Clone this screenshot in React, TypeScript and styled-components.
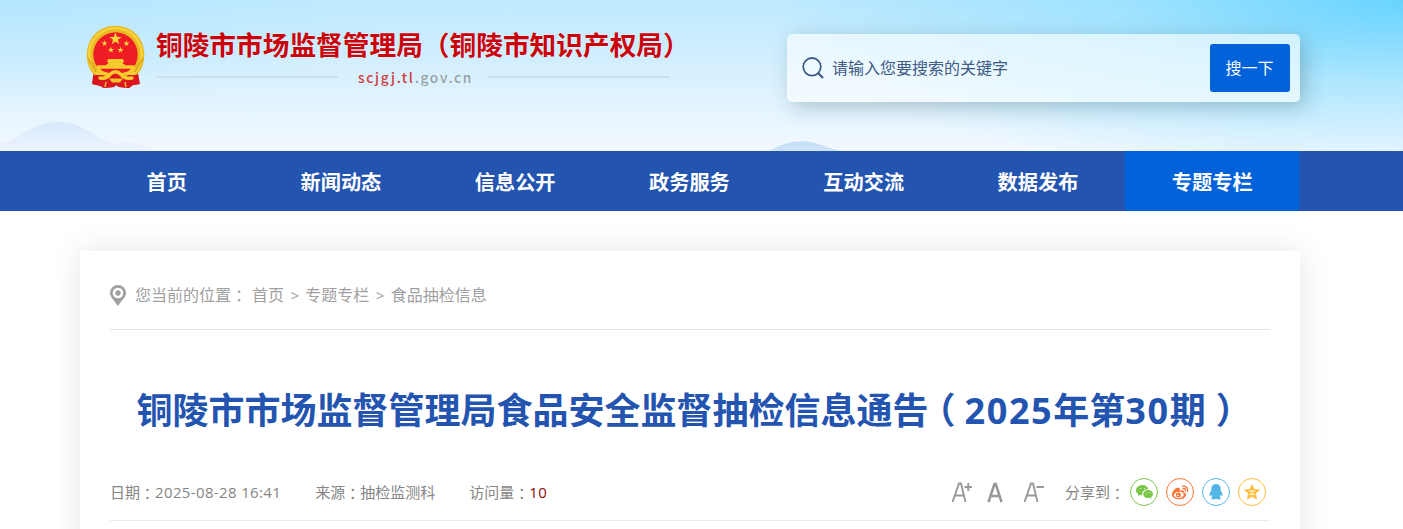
import React from 'react';
import styled, { createGlobalStyle } from 'styled-components';

const GlobalStyle = createGlobalStyle`
  * { box-sizing: border-box; }
  html, body { margin: 0; padding: 0; }
  body {
    background: #fff;
    overflow: hidden;
    font-family: 'Open Sans', 'Noto Sans CJK SC', sans-serif;
    -webkit-font-smoothing: antialiased;
  }
`;

const Page = styled.div`
  height: 529px;
  overflow: hidden;
`;

const Header = styled.header`
  position: relative;
  height: 151px;
  background:
    radial-gradient(ellipse 640px 185px at 1403px 0, rgba(90, 208, 255, 0.85), rgba(115, 217, 255, 0.42) 45%, rgba(130, 220, 255, 0) 100%),
    radial-gradient(ellipse 400px 110px at 0 0, rgba(165, 226, 255, 0.4), rgba(165, 226, 255, 0) 100%),
    linear-gradient(180deg, #bfe9ff 0%, #d1eefe 38%, #e3f4ff 70%, #f3f8ff 100%);
`;

const Hills = styled.svg`
  position: absolute;
  left: 0;
  bottom: 0;
`;

const HeaderInner = styled.div`
  position: relative;
  display: flex;
  justify-content: space-between;
  width: 1220px;
  margin-left: 80px;
`;

const Brand = styled.div`
  display: flex;
  padding: 24px 0 0 6px;
`;

const BrandText = styled.div`
  width: 540px;
  margin-left: 10px;
`;

const BrandName = styled.div`
  font: 700 26.7px/40px 'Noto Sans CJK SC', sans-serif;
  color: #cb0009;
  white-space: nowrap;
  -webkit-text-stroke: 0.8px rgba(255, 255, 255, 0.4);
  paint-order: stroke;
`;

const DomainRow = styled.div`
  display: flex;
  align-items: center;
  width: 514px;
  height: 20px;
  margin-top: 3px;
`;

const Rule = styled.i`
  width: 182px;
  height: 2px;
  background: #cfe1ef;
`;

const Domain = styled.span`
  flex: 1;
  padding-left: 20px;
  font: 500 13.7px/20px 'Noto Sans CJK SC', sans-serif;
  letter-spacing: 1.72px;
  color: #999fa3;
  white-space: nowrap;
  b { font-weight: 500; color: #d43a3c; }
`;

const Search = styled.form`
  display: flex;
  align-items: center;
  width: 513px;
  height: 68px;
  margin-top: 34px;
  padding: 0 10px 0 15px;
  border-radius: 5px;
  background: rgba(255, 255, 255, 0.6);
  box-shadow: 5px 5px 20px rgba(40, 80, 90, 0.3);
`;

const Placeholder = styled.span`
  flex: 1;
  margin-left: 8px;
  padding-bottom: 2px;
  font-size: 16px;
  color: #405a86;
`;

const SearchButton = styled.button`
  width: 80px;
  height: 48px;
  padding: 0 1px 2px 0;
  border: 0;
  border-radius: 3px;
  background: #0262d9;
  color: #fff;
  font: 16px 'Noto Sans CJK SC', sans-serif;
`;

const Nav = styled.nav`
  display: flex;
  height: 60px;
  padding-left: 79.5px;
  background: #2354b0;
`;

const NavItem = styled.a<{ $active?: boolean }>`
  width: 174.28px;
  background: ${p => (p.$active ? '#0262d9' : 'transparent')};
  color: #fff;
  text-align: center;
  font: 700 20.2px/61px 'Noto Sans CJK SC', sans-serif;
`;

const Card = styled.main`
  width: 1220px;
  height: 320px;
  margin: 40px 0 0 80px;
  padding: 0 30px;
  background: #fff;
  box-shadow: 0 0 30px rgba(0, 0, 0, 0.1);
`;

const Crumbs = styled.div`
  display: flex;
  align-items: center;
  height: 79px;
  padding-top: 10px;
  border-bottom: 1px solid #e4e4e4;
  color: #a0a0a0;
  font-size: 16px;
  line-height: 24px;
  white-space: pre;
  svg { margin-right: 9px; }
`;

const CrumbLink = styled.span<{ $first?: boolean }>`
  margin-left: ${p => (p.$first ? 5 : 0)}px;
`;

const Arrow = styled.span`
  width: 21.3px;
  text-align: center;
  font-size: 15px;
`;

const Colon = styled.span`
  font-family: 'Noto Sans CJK TC', sans-serif;
  line-height: 1;
  vertical-align: -1px;
`;

const Title = styled.h1`
  height: 54px;
  margin: 54px 0 0 26.5px;
  color: #2354b0;
  font: 700 36px/54px 'Open Sans', 'Noto Sans CJK SC', sans-serif;
  white-space: nowrap;
`;

const TitleDigits = styled.span`
  letter-spacing: 1.6px;
`;

const Paren = styled.span<{ $before: number; $after: number }>`
  margin: 0 ${p => p.$after}px 0 ${p => p.$before}px;
  font-family: 'Noto Sans CJK SC', sans-serif;
  font-feature-settings: 'halt';
  line-height: 1;
`;

const Meta = styled.div`
  display: flex;
  align-items: center;
  height: 55px;
  margin-top: 28px;
  border-bottom: 1px solid #ebebeb;
  color: #858585;
  font-size: 15px;
  line-height: 22px;
  white-space: nowrap;
`;

const MetaItem = styled.span`
  margin-right: 34px;
  padding-bottom: 3px;
`;

const Digits = styled.span<{ $color?: string }>`
  letter-spacing: 0.36px;
  color: ${p => p.$color || 'inherit'};
`;

const Tools = styled.div`
  display: flex;
  align-items: center;
  margin-left: auto;
  padding: 0 4px 2px 0;
`;

const ShareLabel = styled.span`
  margin: 0 5px 0 20px;
  padding-bottom: 1px;
`;

const Shares = styled.div`
  display: flex;
  gap: 8px;
`;

const ShareIcon = styled.span<{ $color: string }>`
  display: flex;
  align-items: center;
  justify-content: center;
  width: 28px;
  height: 28px;
  border: 1px solid ${p => p.$color};
  border-radius: 50%;
  color: ${p => p.$color};
`;

const star = (cx: number, cy: number, r: number) =>
  Array.from({ length: 10 }, (_, i) => {
    const a = (Math.PI / 5) * i - Math.PI / 2;
    const q = i % 2 ? r * 0.4 : r;
    return `${cx + q * Math.cos(a)},${cy + q * Math.sin(a)}`;
  }).join(' ');

const Emblem = () => (
  <svg width="60" height="66" viewBox="0 0 60 66">
    <path d="M8 45 L6 60 L14 62 L18 64 L28 63 L30 61 L33 63 L43 64 L47 61 L54 60 L51 44Z" fill="#d3121b" />
    <path d="M29.500 1.700C13 1.700.8 14 .8 31c0 11 5 19 10 22h37c6-4 10.500-11 10.500-22C58.300 14 46 1.700 29.500 1.700z" fill="#e9b91f" />
    <circle cx="29.5" cy="30.5" r="26.3" fill="none" stroke="#f7d23c" strokeWidth="2.5" />
    <path d="M2 34Q7 42 10 48M57 34Q52 42 49 48" fill="none" stroke="#c98a12" strokeWidth="1" />
    <circle cx="29.5" cy="30.5" r="22.2" fill="#ee1c25" />
    <path d="M9 51L6.500 60 14 61.500 18 64 28 63 30 61 33 63 43 64 47 61 53.500 60 50 51z" fill="#dc151e" />
    <g fill="#fbd63c">
      <polygon points={star(29.5, 15, 6.5)} />
      <polygon points={star(18.5, 19.5, 3.2)} />
      <polygon points={star(40.5, 19.5, 3.2)} />
      <polygon points={star(25, 26, 3.2)} />
      <polygon points={star(34.5, 26, 3.2)} />
      <path d="M22 35h15l1 3h-1v2h1.500v3h-18v-3H22v-2h-1z" fill="#f4cb2e" />
    </g>
    <path d="M12 43h35M12 44.500Q14 49.500 22 50.500M47 44.500Q45 49.500 37 50.500" fill="none" stroke="#f5cb2e" strokeWidth="3.500" strokeLinecap="round" />
    <path d="M14 54Q21 55 24 50.500Q29.500 45 35 50.500Q38 55 46 54" fill="none" stroke="#f5cb2e" strokeWidth="3.500" strokeLinecap="round" />
    <path d="M23 54.500h14l-3 4h-8z" fill="#f0c02b" />
    <path d="M20 58l-1 5M39 58l1 5" stroke="#f0b92a" strokeWidth="1.500" />
  </svg>
);

const navItems = ['首页', '新闻动态', '信息公开', '政务服务', '互动交流', '数据发布', '专题专栏'];

export default function App() {
  return (
    <Page>
      <GlobalStyle />
      <Header>
        <Hills width="1403" height="30" viewBox="0 121 1403 30">
          <defs>
            <linearGradient id="hillA" x1="0" y1="0" x2="0" y2="1">
              <stop offset="0" stopColor="#d8e9fb" />
              <stop offset="1" stopColor="#edf3fe" />
            </linearGradient>
            <linearGradient id="hillB" x1="0" y1="0" x2="0" y2="1">
              <stop offset="0" stopColor="#c4def9" />
              <stop offset="1" stopColor="#d0e3fa" />
            </linearGradient>
          </defs>
          <path d="M0 143C20 141 30 122 58 122C86 122 98 142 116 144C130 140 146 146 158 151H0Z" fill="url(#hillA)" />
          <path d="M769 151C790 139 807 139 824 146L840 151Z" fill="url(#hillB)" />
        </Hills>
        <HeaderInner>
          <Brand>
            <Emblem />
            <BrandText>
              <BrandName>铜陵市市场监督管理局（铜陵市知识产权局）</BrandName>
              <DomainRow>
                <Rule />
                <Domain><b>scjgj.tl</b>.gov.cn</Domain>
                <Rule />
              </DomainRow>
            </BrandText>
          </Brand>
          <Search>
            <svg width="22" height="22" viewBox="0 0 22 22" fill="none" stroke="#405a86" strokeWidth="1.8">
              <circle cx="10" cy="9.8" r="8.8" />
              <path d="M15.8 15.8L21 21" strokeWidth="2.2" />
            </svg>
            <Placeholder>请输入您要搜索的关键字</Placeholder>
            <SearchButton type="button">搜一下</SearchButton>
          </Search>
        </HeaderInner>
      </Header>
      <Nav>
        {navItems.map((label, i) => (
          <NavItem key={label} $active={i === 6}>{label}</NavItem>
        ))}
      </Nav>
      <Card>
        <Crumbs>
          <svg width="16" height="21" viewBox="0 0 16 21">
            <path fill="#a0a0a0" fillRule="evenodd" d="M8 0a8 8 0 0 1 8 8c0 4-3.500 6.500-8 13C3.500 14.500 0 12 0 8a8 8 0 0 1 8-8zM8 2.700a5.300 5.300 0 1 0 0 10.600A5.300 5.300 0 0 0 8 2.700z" />
            <circle cx="8" cy="8" r="2.7" fill="#a0a0a0" />
          </svg>
          <CrumbLink>您当前的位置<Colon>：</Colon></CrumbLink>
          <CrumbLink $first>首页</CrumbLink>
          <Arrow>&gt;</Arrow>
          <CrumbLink>专题专栏</CrumbLink>
          <Arrow>&gt;</Arrow>
          <CrumbLink>食品抽检信息</CrumbLink>
        </Crumbs>
        <Title>
          铜陵市市场监督管理局食品安全监督抽检信息通告<Paren $before={9} $after={9}>（</Paren>
          <TitleDigits>2025</TitleDigits>年第<TitleDigits>30</TitleDigits>期<Paren $before={10} $after={8}>）</Paren>
        </Title>
        <Meta>
          <MetaItem>日期<Colon>：</Colon><Digits>2025-08-28 16:41</Digits></MetaItem>
          <MetaItem>来源<Colon>：</Colon>抽检监测科</MetaItem>
          <MetaItem>访问量<Colon>：</Colon><Digits $color="#8b0d0d">10</Digits></MetaItem>
          <Tools>
            <svg width="94" height="24" viewBox="0 0 94 24" fill="none" stroke="#999" strokeWidth="1.9">
              <path d="M1.500 22L8 3.500h2L14.500 22M4 15.500h8.500M13.500 7h7.500M17.300 3v8" />
              <path d="M37.500 22L43.400 4h1.400L50.500 22M39.500 16h9.500" strokeWidth="2.500" />
              <path d="M73.500 22L80 3.500h2L86.500 22M76 15.500h8.500M85.500 7h7.500" />
            </svg>
            <ShareLabel>分享到<Colon>：</Colon></ShareLabel>
            <Shares>
              <ShareIcon $color="#7bc549">
                <svg width="17" height="15" viewBox="0 0 17 15" fill="currentColor">
                  <path d="M6.500 0C2.900 0 0 2.300 0 5.200c0 1.700.9 3 2.400 4L2 11l2.200-1.100 2 .3c-.6-3.500 2-6 6.200-6C11.800 1.700 9.400 0 6.500 0z" />
                  <path d="M17 8.900c0-2.300-2.200-4-4.900-4S7.200 6.600 7.200 8.900s2.200 4.100 4.900 4.100l1.600-.2L15.500 14l-.4-1.900c1.200-.8 1.900-1.900 1.900-3.200z" />
                  <g fill="#fff"><circle cx="4.300" cy="3.600" r=".6" /><circle cx="8.500" cy="3.600" r=".6" /><circle cx="10.500" cy="7.700" r=".5" /><circle cx="13.800" cy="7.700" r=".5" /></g>
                </svg>
              </ShareIcon>
              <ShareIcon $color="#ff763b">
                <svg width="17" height="15" viewBox="0 0 17 15">
                  <path fill="currentColor" d="M6.800 2.700C4.500 1.700 0 6 0 9.400 0 12.500 3.500 14.300 7 14.300c4.300 0 7-2.300 7-4.600 0-1.500-1.200-2.200-2.300-2.500.6-1.900-.6-2.400-3.600-1.400.3-1.200.1-2.700-1.300-3.100z" />
                  <ellipse cx="6.800" cy="9.900" rx="4.900" ry="3.200" fill="#fff" transform="rotate(-8 6.800 9.900)" />
                  <circle cx="6.400" cy="10.100" r="2.500" fill="currentColor" />
                  <circle cx="5.800" cy="10.500" r=".8" fill="#fff" />
                  <path d="M10.500 1.200c3.300-.8 5.900 1.800 5 5.300M11 3.600c1.800-.4 2.900.8 2.400 2.500" fill="none" stroke="currentColor" strokeWidth="1.300" strokeLinecap="round" />
                </svg>
              </ShareIcon>
              <ShareIcon $color="#56b6e7">
                <svg width="14" height="16" viewBox="0 0 14 16" fill="currentColor">
                  <path d="M7 0C4.200 0 2.300 2 2.300 4.700v1.500C1.300 7.700.3 9.600.4 11.300c.1 1.200.9.700 1.700-.5.200.9.700 1.700 1.300 2.200-1.100.4-1.400 1.100-1 1.700.6 1.100 3.600.9 4.600.1 1 .8 4 1 4.600-.1.400-.6.100-1.300-1-1.700.6-.5 1.100-1.300 1.300-2.200.8 1.200 1.600 1.700 1.700.5.100-1.700-.9-3.600-1.900-5.100V4.700C11.700 2 9.800 0 7 0z" />
                </svg>
              </ShareIcon>
              <ShareIcon $color="#fdbe3d">
                <svg width="16" height="16" viewBox="0 0 16 16">
                  <path fill="currentColor" stroke="currentColor" strokeWidth=".8" strokeLinejoin="round" d="M8 .8l2.100 4.600 5.300.5-4 3.600 1.200 5.500L8 12.400 3.400 15l1.200-5.500-4-3.600 5.300-.5z" />
                  <path d="M5 6.900h5.400l-4.500 3.600h5.200" fill="none" stroke="#fff" strokeWidth=".9" />
                </svg>
              </ShareIcon>
            </Shares>
          </Tools>
        </Meta>
      </Card>
    </Page>
  );
}
